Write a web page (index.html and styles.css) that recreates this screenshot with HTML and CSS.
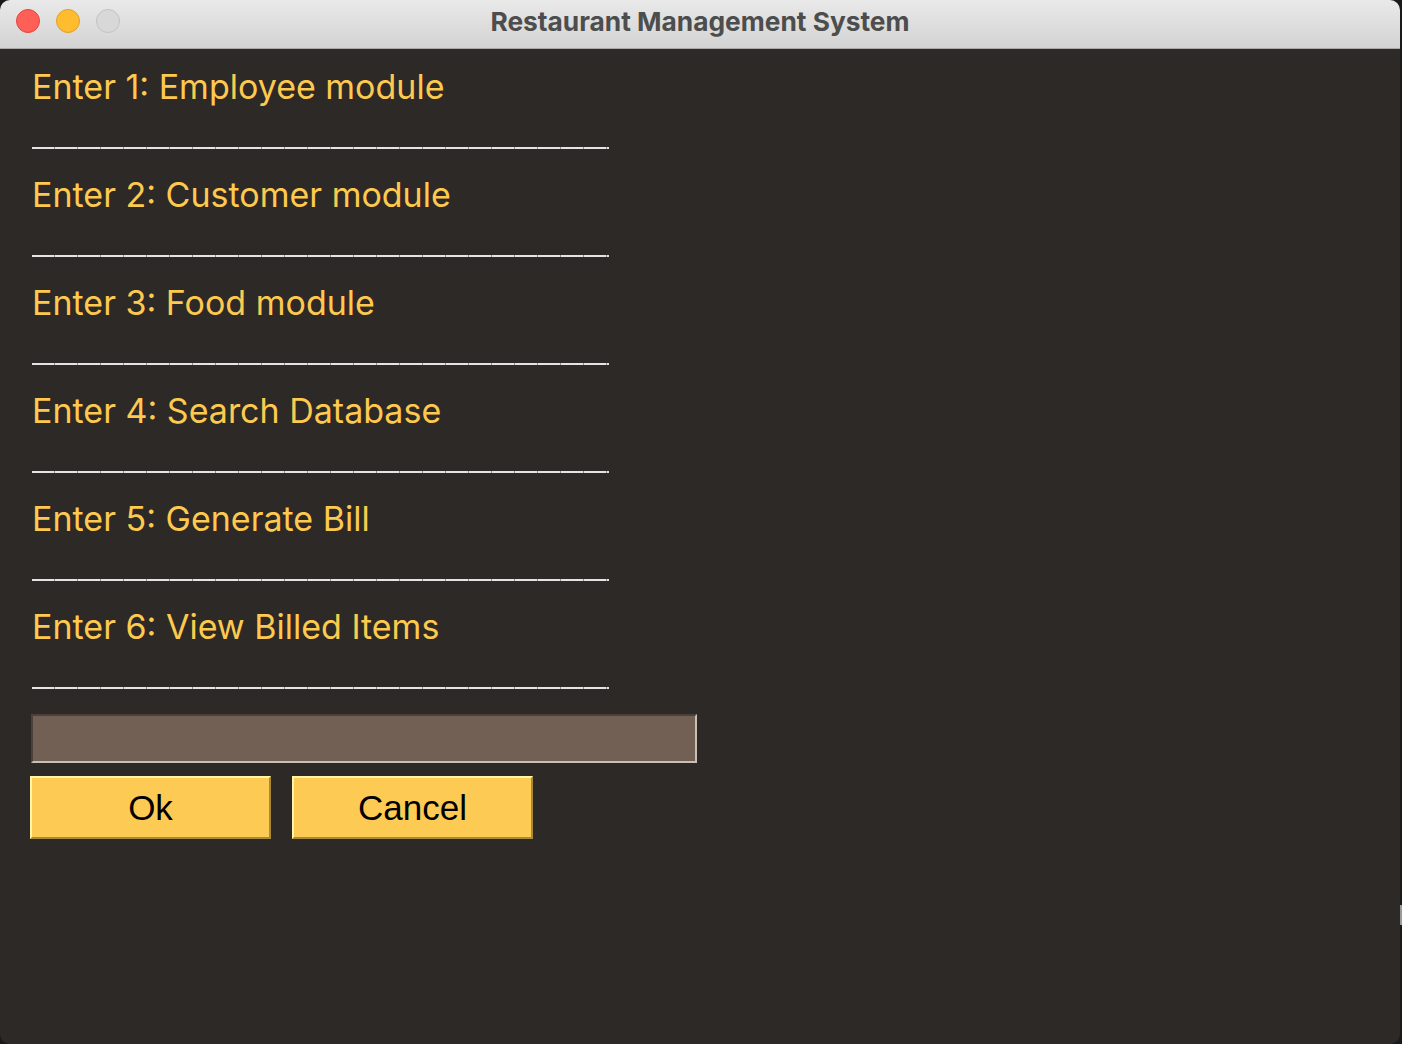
FILE: index.html
```
<!DOCTYPE html>
<html>
<head>
<meta charset="utf-8">
<title>Restaurant Management System</title>
<link rel="stylesheet" href="styles.css">
</head>
<body>
<div class="window">
  <div class="titlebar">
    <div class="lights">
      <span class="light red"></span>
      <span class="light yellow"></span>
      <span class="light gray"></span>
    </div>
    <div class="title">Restaurant Management System</div>
  </div>
  <div class="content">
    <div class="row"><div class="label">Enter 1: Employee module</div><div class="rule"></div></div>
    <div class="row"><div class="label">Enter 2: Customer module</div><div class="rule"></div></div>
    <div class="row"><div class="label">Enter 3: Food module</div><div class="rule"></div></div>
    <div class="row"><div class="label">Enter 4: Search Database</div><div class="rule"></div></div>
    <div class="row"><div class="label">Enter 5: Generate Bill</div><div class="rule"></div></div>
    <div class="row"><div class="label">Enter 6: View Billed Items</div><div class="rule"></div></div>
    <div class="entry"></div>
    <div class="buttons">
      <div class="btn">Ok</div>
      <div class="btn">Cancel</div>
    </div>
  </div>
</div>
<div class="edge-tab"></div>
</body>
</html>
```
FILE: styles.css
```
html, body {
  margin: 0;
  padding: 0;
  background: #1c1a19;
}
body {
  position: relative;
  width: 1402px;
  height: 1044px;
  overflow: hidden;
}
.window {
  width: 1400px;
  height: 1044px;
  border-radius: 10px;
  overflow: hidden;
  background: #2d2926;
}
.titlebar {
  position: relative;
  height: 48px;
  border-bottom: 1px solid #aaaaaa;
  background: linear-gradient(to bottom, #e9e9e9, #d3d3d3);
  display: flex;
  align-items: center;
  justify-content: center;
}
.lights {
  position: absolute;
  left: 16px;
  top: 9px;
  display: flex;
  gap: 16px;
}
.light {
  width: 22px;
  height: 22px;
  border-radius: 50%;
  border: 1px solid;
}
.red { background: #fe5f57; border-color: #e2463f; }
.yellow { background: #febc2e; border-color: #dfa024; }
.gray { background: #d8d8d8; border-color: #c2c2c2; }
.title {
  font-family: Inter, "Liberation Sans", sans-serif;
  font-weight: 700;
  font-size: 26.3px;
  color: #4d4d4d;
  margin-top: -5px;
}
.content {
  padding: 18px 0 0 32px;
}
.row {
  height: 108px;
}
.label {
  font-family: Inter, "Liberation Sans", sans-serif;
  font-size: 34px;
  line-height: 40px;
  color: #fdc94f;
}
.rule {
  margin-top: 40px;
  width: 577px;
  height: 2px;
  background: repeating-linear-gradient(to right, #e4e4e4 0 22px, #8f8c8a 22px 23px);
}
.entry {
  margin-top: -1px;
  margin-left: -1px;
  width: 666px;
  height: 49px;
  box-sizing: border-box;
  background: #726055;
  border-top: 2px solid #4a413b;
  border-left: 2px solid #4a413b;
  border-bottom: 2px solid #c8bfb7;
  border-right: 2px solid #c8bfb7;
}
.buttons {
  display: flex;
  gap: 21px;
  margin-top: 13px;
  margin-left: -2px;
}
.btn {
  width: 241px;
  height: 63px;
  box-sizing: border-box;
  background: #fdca53;
  border-top: 2px solid #fff7a6;
  border-left: 2px solid #fff7a6;
  border-bottom: 2px solid #a6893b;
  border-right: 2px solid #a6893b;
  display: flex;
  align-items: center;
  justify-content: center;
  font-family: "Liberation Sans", Arial, sans-serif;
  font-size: 35px;
  color: #000;
}
.edge-tab {
  position: absolute;
  left: 1400px;
  top: 905px;
  width: 2px;
  height: 20px;
  background: #9a9a9a;
}
```
